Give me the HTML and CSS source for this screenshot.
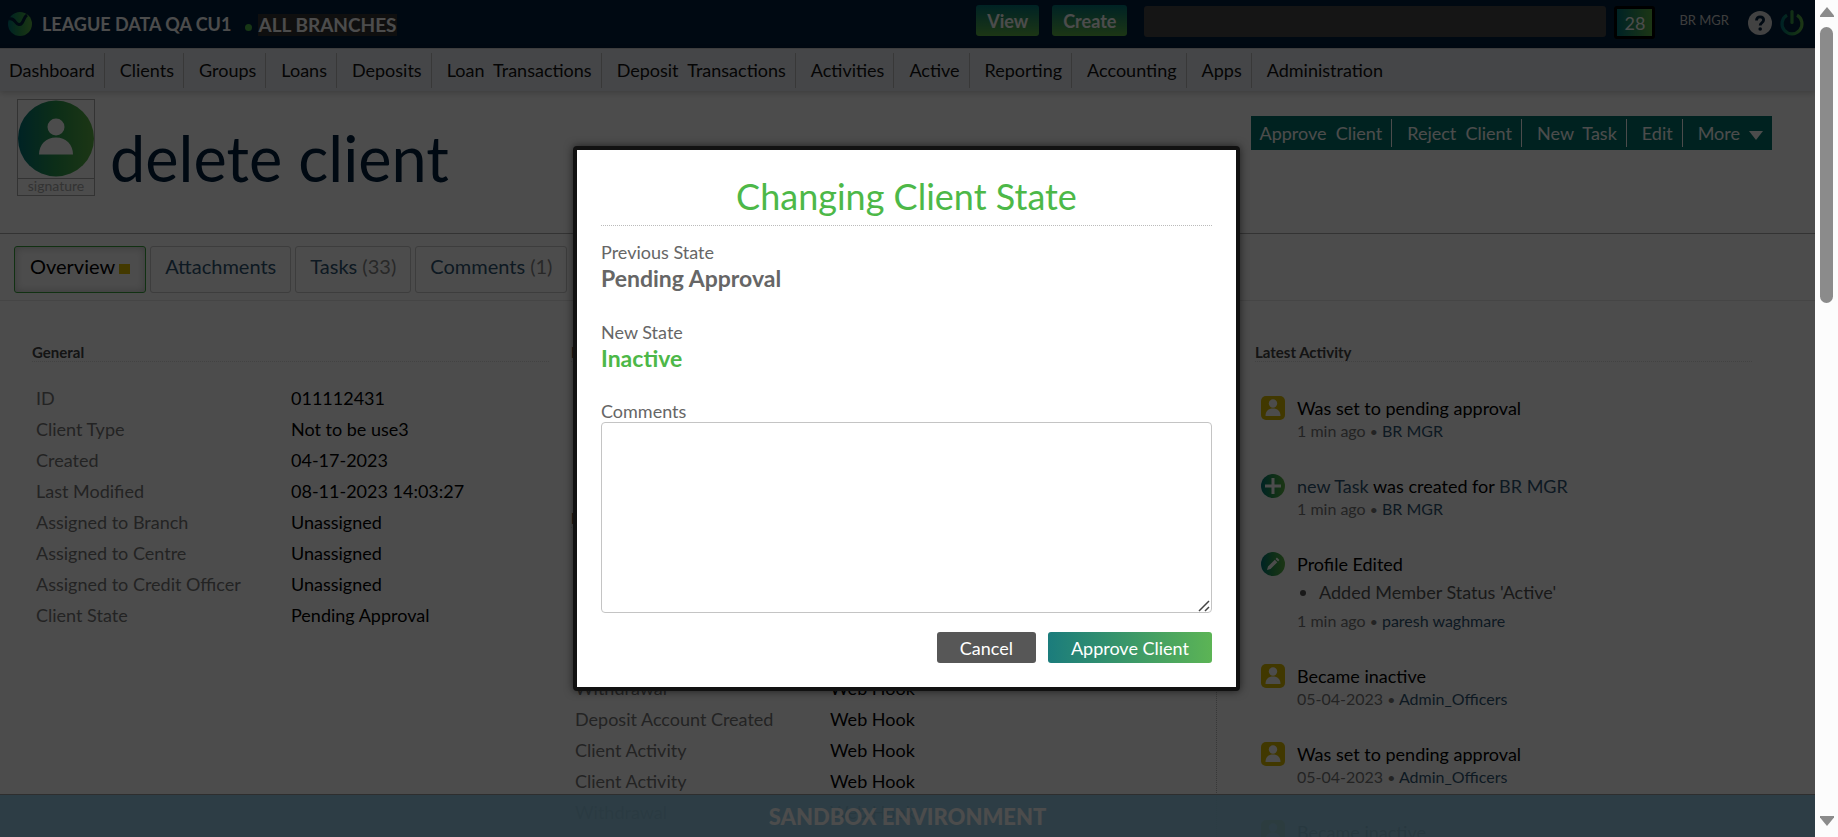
FILE: index.html
```html
<!DOCTYPE html>
<html lang="en">
<head>
<meta charset="utf-8">
<title>delete client</title>
<link rel="stylesheet" href="styles.css">
</head>
<body>
<svg class="defs" width="0" height="0" aria-hidden="true">
  <defs>
    <linearGradient id="brand" x1="0" y1="0" x2="1" y2="0"><stop offset="0" stop-color="#00747a"/><stop offset=".5" stop-color="#2b9a50"/><stop offset="1" stop-color="#5fb546"/></linearGradient>
    <symbol id="person" viewBox="0 0 24 24"><rect width="24" height="24" rx="5" fill="#d9bb00"/><circle cx="12" cy="7.5" r="4.2" fill="#fff"/><path d="M4.5 20c0-5 3-7.5 7.500-7.500s7.500 2.500 7.500 7.500z" fill="#fff"/></symbol>
  </defs>
</svg>
<div class="window">
  <div class="page">
    <header class="topbar">
      <svg class="logo" viewBox="0 0 24 24" aria-hidden="true"><circle cx="12" cy="12" r="12" fill="url(#brand)"/><path d="M1 7c3-1 4.500 0 6.500 3s4.500 3.500 6.500 1 2-6 5-8" fill="none" stroke="#001e3c" stroke-width="3"/></svg>
      <span class="org">LEAGUE DATA QA CU1</span>
      <span class="dot"></span>
      <a class="branch" href="#">ALL BRANCHES</a>
      <div class="tools">
        <button class="top-btn">View</button>
        <button class="top-btn">Create</button>
        <input class="search" type="text" aria-label="Search">
        <button class="count">28</button>
        <a class="user" href="#">BR MGR</a>
        <button class="icon-btn" aria-label="Help"><svg viewBox="0 0 24 24"><circle cx="12" cy="12" r="12" fill="#ddd"/><path d="M8.500 9.500c0-2.300 1.500-3.700 3.600-3.700s3.500 1.300 3.500 3.200c0 2.700-3.400 2.800-3.400 5.500" fill="none" stroke="#001e3c" stroke-width="2.800"/><circle cx="12.200" cy="18" r="1.800" fill="#001e3c"/></svg></button>
        <button class="icon-btn" aria-label="Log out"><svg viewBox="0 0 24 24"><g fill="none" stroke="url(#brand)" stroke-width="3.200"><path d="M7 4.200A10 10 0 1 0 17 4.200"/></g><rect x="10.400" y="-1" width="3.200" height="14" rx="1.600" fill="#3d9f4c"/></svg></button>
      </div>
    </header>
    <nav class="nav">
      <a href="#">Dashboard</a><a href="#">Clients</a><a href="#">Groups</a><a href="#">Loans</a><a href="#">Deposits</a><a href="#">Loan  Transactions</a><a href="#">Deposit  Transactions</a><a href="#">Activities</a><a href="#">Active</a><a href="#">Reporting</a><a href="#">Accounting</a><a href="#">Apps</a><a href="#">Administration</a>
    </nav>
    <section class="profile">
      <div class="portrait">
        <div class="photo"><svg viewBox="0 0 76 76" aria-hidden="true"><circle cx="38" cy="38" r="38" fill="url(#brand)"/><circle cx="38" cy="26.500" r="8.500" fill="#fff"/><path d="M21 54c0-10 7-17 17-17s17 7 17 17z" fill="#fff"/></svg></div>
        <div class="signature">signature</div>
      </div>
      <h1>delete client</h1>
      <div class="actions">
        <a href="#">Approve  Client</a><a href="#">Reject  Client</a><a href="#">New  Task</a><a href="#">Edit</a><a href="#">More<span class="caret"></span></a>
      </div>
    </section>
    <div class="tabs">
      <a class="tab active" href="#">Overview<span class="marker"></span></a>
      <a class="tab" href="#">Attachments</a>
      <a class="tab" href="#">Tasks <span>(33)</span></a>
      <a class="tab" href="#">Comments <span>(1)</span></a>
    </div>
    <main class="content">
      <section>
        <h2>General</h2>
        <table>
          <tr><th>ID</th><td>011112431</td></tr>
          <tr><th>Client Type</th><td>Not to be use3</td></tr>
          <tr><th>Created</th><td>04-17-2023</td></tr>
          <tr><th>Last Modified</th><td>08-11-2023 14:03:27</td></tr>
          <tr><th>Assigned to Branch</th><td>Unassigned</td></tr>
          <tr><th>Assigned to Centre</th><td>Unassigned</td></tr>
          <tr><th>Assigned to Credit Officer</th><td>Unassigned</td></tr>
          <tr><th>Client State</th><td>Pending Approval</td></tr>
        </table>
      </section>
      <section class="middle">
        <h2>Details</h2>
        <table>
          <tr><th>Member Status</th><td>Active</td></tr>
          <tr><th>Client Type</th><td>Not to be use3</td></tr>
          <tr><th>Client State</th><td>Pending Approval</td></tr>
        </table>
        <h2>Notifications</h2>
        <table>
          <tr><th>Client Activity</th><td>Web Hook</td></tr>
          <tr><th>Client Activity</th><td>Web Hook</td></tr>
          <tr><th>Client Activity</th><td>Web Hook</td></tr>
          <tr><th>Client Activity</th><td>Web Hook</td></tr>
          <tr><th>Withdrawal</th><td>Web Hook</td></tr>
          <tr><th>Deposit Account Created</th><td>Web Hook</td></tr>
          <tr><th>Client Activity</th><td>Web Hook</td></tr>
          <tr><th>Client Activity</th><td>Web Hook</td></tr>
          <tr><th>Withdrawal</th><td>Web Hook</td></tr>
        </table>
      </section>
      <section class="latest">
        <h2>Latest Activity</h2>
        <ul class="feed">
          <li><svg class="ico"><use href="#person"/></svg><div><p>Was set to pending approval</p><small>1 min ago <i>•</i> <a href="#">BR MGR</a></small></div></li>
          <li><svg class="ico" viewBox="0 0 24 24"><circle cx="12" cy="12" r="12" fill="url(#brand)"/><path d="M12 4v16M4 12h16" stroke="#fff" stroke-width="3"/></svg><div><p><a href="#">new Task</a> was created for <a href="#">BR MGR</a></p><small>1 min ago <i>•</i> <a href="#">BR MGR</a></small></div></li>
          <li><svg class="ico" viewBox="0 0 24 24"><circle cx="12" cy="12" r="12" fill="url(#brand)"/><path d="M6 18l1-3.500 6.800-6.800 2.500 2.500L9.500 17zM14.600 6.900l1.300-1.300 2.500 2.500-1.300 1.300z" fill="#fff"/></svg><div><p>Profile Edited</p><ul class="changes"><li>Added Member Status 'Active'</li></ul><small>1 min ago <i>•</i> <a href="#">paresh waghmare</a></small></div></li>
          <li><svg class="ico"><use href="#person"/></svg><div><p>Became inactive</p><small>05-04-2023 <i>•</i> <a href="#">Admin_Officers</a></small></div></li>
          <li><svg class="ico"><use href="#person"/></svg><div><p>Was set to pending approval</p><small>05-04-2023 <i>•</i> <a href="#">Admin_Officers</a></small></div></li>
          <li><svg class="ico"><use href="#person"/></svg><div><p>Became inactive</p><small>05-04-2023 <i>•</i> <a href="#">Admin_Officers</a></small></div></li>
        </ul>
      </section>
    </main>
    <div class="sandbox">SANDBOX ENVIRONMENT</div>
    <div class="overlay">
      <form class="dialog" role="dialog" aria-labelledby="dialog-title">
        <h2 id="dialog-title">Changing Client State</h2>
        <div class="field"><span>Previous State</span><strong>Pending Approval</strong></div>
        <div class="field"><span>New State</span><strong class="new">Inactive</strong></div>
        <label for="comments">Comments</label>
        <div class="comment-box">
          <textarea id="comments"></textarea>
          <svg class="grip" viewBox="0 0 12 12" aria-hidden="true"><path d="M1 11L11 1M7 11l4-4" stroke="#444" stroke-width="1.500"/></svg>
        </div>
        <div class="buttons">
          <button type="button" class="cancel">Cancel</button>
          <button type="button" class="approve">Approve Client</button>
        </div>
      </form>
    </div>
  </div>
  <div class="scrollbar" aria-hidden="true">
    <svg viewBox="0 0 14 10"><path d="M7 0l7 8.500v1.500H0V8.500z" fill="#8b8b8b"/></svg>
    <div class="track"><div class="thumb"></div></div>
    <svg viewBox="0 0 14 10"><path d="M7 10l7-8.500V0H0v1.500z" fill="#8b8b8b"/></svg>
  </div>
</div>
</body>
</html>
```
FILE: styles.css
```css
* { box-sizing: border-box; }
body { margin: 0; font: 18px/24px Lato, "Liberation Sans", sans-serif; color: #000; overflow: hidden; }
a { color: #2f5573; text-decoration: none; }
button, input, textarea { font: inherit; border: 0; margin: 0; padding: 0; }
h1, h2, p, ul { margin: 0; padding: 0; font-weight: 400; }
.defs { position: absolute; }
.window { display: flex; height: 100vh; }
.page { position: relative; flex: 1; min-width: 0; overflow: hidden; background: #fff; }

.topbar { display: flex; align-items: flex-start; height: 48px; padding: 0 11px 0 8px; background: #001e3c; color: #fff; }
.logo { width: 24px; height: 24px; margin: 12px 10px 0 0; }
.org { margin-top: 12px; font-weight: 700; white-space: nowrap; }
.dot { width: 7px; height: 7px; margin: 24px 6px 0 14px; border-radius: 50%; background: #4db848; }
.branch { margin-top: 14px; font-size: 19px; line-height: 22px; font-weight: 700; color: #fff; background: #333; white-space: nowrap; }
.tools { display: flex; align-items: flex-start; margin-left: auto; }
.top-btn { height: 31px; margin: 5px 13px 0 0; padding: 0 11px; border-radius: 3px; background: linear-gradient(#00747a, #5fb546); color: #fff; font-weight: 700; }
.search { width: 462px; height: 31px; margin: 6px 8px 0 4px; border-radius: 3px; background: #474747; }
.count { width: 41px; height: 33px; margin: 6px 24px 0 0; border: 3px solid #000; border-radius: 3px; background: linear-gradient(90deg, #00747a, #5fb546); color: #fff; }
.user { margin: 8px 19px 0 0; font-size: 13px; color: #ccc; }
.icon-btn { width: 24px; height: 24px; margin: 11px 0 0; background: none; }
.icon-btn + .icon-btn { margin-left: 8px; }
.icon-btn svg { display: block; width: 24px; height: 24px; overflow: visible; }

.nav { position: relative; display: flex; height: 43px; padding: 4px 0 3px; background: #e7eaf0; border-top: 1px solid #ccc; box-shadow: 0 2px 6px rgba(0, 0, 0, .2); white-space: pre; }
.nav a { padding: 5px 9px 0 15px; line-height: 24px; color: #111; border-right: 1px solid #bbb; }
.nav a:first-child { padding-left: 9px; }
.nav a:last-child { border: 0; }

.profile { display: flex; align-items: flex-start; height: 143px; padding: 8px 43px 0 17px; border-bottom: 1px solid #aaa; }
.portrait { width: 78px; }
.photo { height: 79px; padding: 0 1px 1px 0; border: 1px solid #aaa; border-bottom: 0; }
.photo svg { display: block; width: 76px; height: 77px; }
.signature { height: 18px; border: 1px solid #aaa; color: #aaa; font-size: 14px; line-height: 14px; text-align: center; }
.profile h1 { margin: 19px 0 0 15px; font-size: 63px; line-height: 80px; color: #001e3c; }
.actions { display: flex; margin: 17px 0 0 auto; padding: 3px 0; height: 34px; background: #00746b; white-space: pre; }
.actions a { padding: 2px 9px 0 15px; line-height: 24px; color: #fff; border-right: 1px solid #fff; }
.actions a:first-child { padding-left: 9px; }
.actions a:last-child { border: 0; }
.caret { display: inline-block; margin-left: 9px; border: 7px solid transparent; border-top: 9px solid #fff; border-bottom: 0; }

.tabs { display: flex; gap: 4px; height: 67px; padding: 12px 14px 0; border-bottom: 1px solid #e8e8e8; }
.tab { height: 47px; padding: 7px 14px; border: 1px solid #ccc; border-radius: 3px; font-size: 20px; white-space: nowrap; }
.tab span { color: #888; }
.tab.active { padding: 7px 15px; color: #000; border-color: #39a33c; box-shadow: inset 0 0 8px rgba(0, 0, 0, .25); }
.tab .marker { display: inline-block; width: 11px; height: 10px; margin-left: 4px; background: #e0c000; }

.content { display: grid; grid-template-columns: 517fr 646fr 513fr; gap: 22px; padding: 0 63px 0 32px; height: 600px; }
.content section { padding-top: 42px; }
.content h2 { height: 19px; border-bottom: 1px dotted #ddd; font-size: 15px; line-height: 18px; font-weight: 700; color: #444; }
.content table { width: 100%; margin: 20px 0 34px; border-collapse: collapse; table-layout: fixed; }
.content th, .content td { height: 31px; padding: 0 4px; font-weight: 400; text-align: left; }
.content th { width: 255px; color: #777; }
.content .middle { padding-right: 22px; border-right: 1px dotted #bbb; }
.content .latest { padding-left: 16px; }

.feed { list-style: none; margin-top: 34px; }
.feed > li { display: flex; gap: 12px; padding-left: 6px; margin-bottom: 33px; }
.ico { width: 24px; height: 24px; flex: none; }
.feed p { line-height: 24px; }
.feed small { display: block; font-size: 16px; line-height: 20px; padding-top: 1px; color: #777; }
.feed i { font-style: normal; font-size: 14px; line-height: 16px; }
.changes { padding: 4px 0 6px 22px; line-height: 24px; color: #555; list-style: disc; }

.sandbox { position: absolute; left: 0; right: 0; bottom: 0; height: 43px; padding-top: 10px; background: rgba(143, 201, 228, .93); border-top: 1px solid #999; color: #fff; font-size: 22px; line-height: 24px; font-weight: 900; text-align: center; }

.overlay { position: absolute; inset: 0; display: flex; align-items: center; justify-content: center; padding-right: 2px; background: rgba(0, 0, 0, .7); }
.dialog { width: 667px; max-width: 100%; padding: 24px; background: #fff; border: 4px solid #111; border-radius: 4px; box-shadow: 0 0 8px rgba(0, 0, 0, .6); color: #666; }
.dialog h2 { height: 52px; margin-bottom: 14px; border-bottom: 1px dotted #bbb; font-size: 36px; line-height: 44px; color: #4db848; text-align: center; }
.field { margin-bottom: 28px; }
.field span, .field strong, .dialog label { display: block; }
.dialog label { line-height: 22px; }
.field strong { font-size: 23px; line-height: 28px; }
.field .new { color: #4db848; }
.comment-box { position: relative; }
.dialog textarea { display: block; width: 100%; height: 191px; border: 1px solid #c4c4c4; border-radius: 4px; resize: none; }
.grip { position: absolute; right: 2px; bottom: 1px; width: 12px; height: 12px; }
.buttons { display: flex; justify-content: flex-end; gap: 12px; margin-top: 19px; }
.buttons button { height: 31px; padding: 1px 23px 0; border-radius: 3px; color: #fff; }
.cancel { background: #575757; }
.approve { background: linear-gradient(90deg, #1b7c7c, #5cb455); }

.scrollbar { display: flex; flex-direction: column; align-items: center; width: 23px; padding: 7px 0 11px; background: #fcfcfc; }
.scrollbar svg { width: 14px; height: 10px; flex: none; }
.track { flex: 1; padding-top: 10px; }
.thumb { width: 13px; height: 35%; border-radius: 7px; background: #8b8b8b; }
```
